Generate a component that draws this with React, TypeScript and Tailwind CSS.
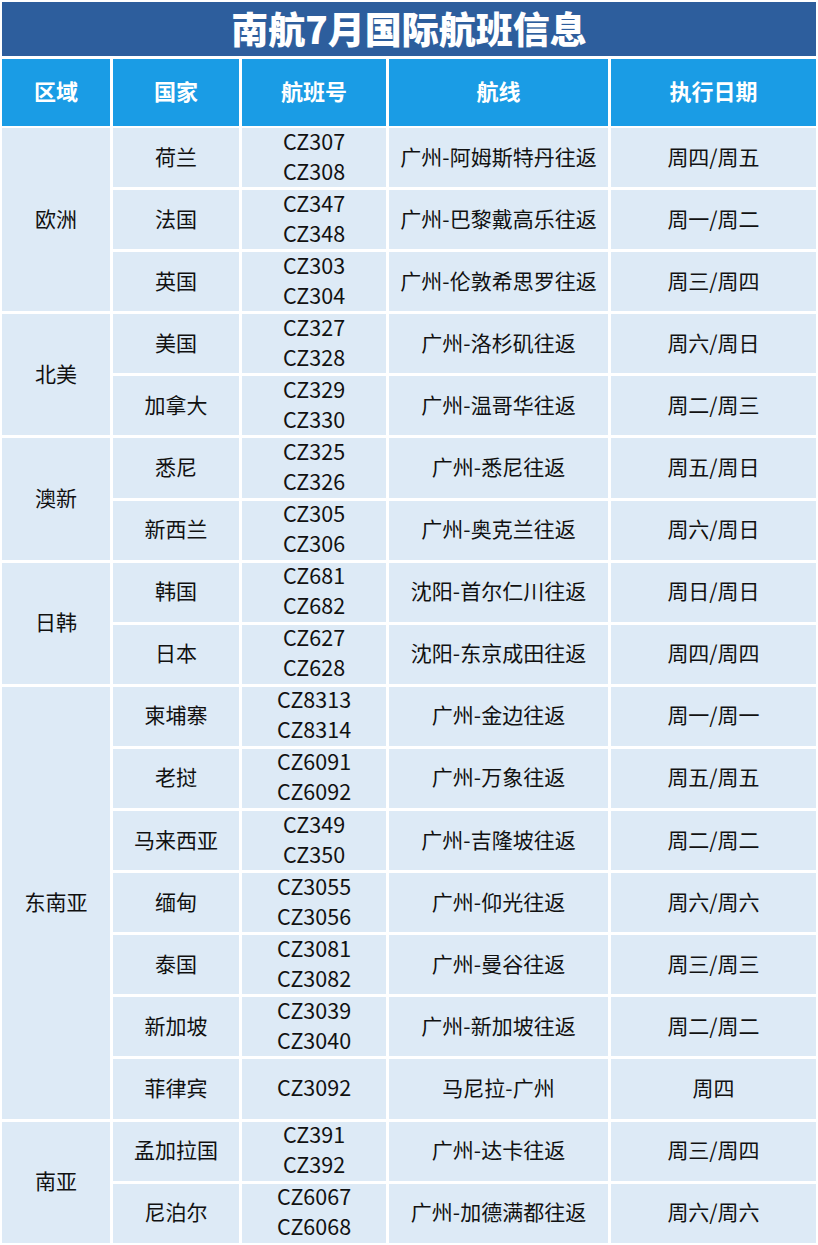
import React from "react";

type Row = { country: string; flights: string[]; route: string; days: string };
type Group = { region: string; span: string; rows: Row[] };

const groups: Group[] = [
  {
    region: "欧洲",
    span: "row-span-3",
    rows: [
      { country: "荷兰", flights: ["CZ307", "CZ308"], route: "广州-阿姆斯特丹往返", days: "周四/周五" },
      { country: "法国", flights: ["CZ347", "CZ348"], route: "广州-巴黎戴高乐往返", days: "周一/周二" },
      { country: "英国", flights: ["CZ303", "CZ304"], route: "广州-伦敦希思罗往返", days: "周三/周四" },
    ],
  },
  {
    region: "北美",
    span: "row-span-2",
    rows: [
      { country: "美国", flights: ["CZ327", "CZ328"], route: "广州-洛杉矶往返", days: "周六/周日" },
      { country: "加拿大", flights: ["CZ329", "CZ330"], route: "广州-温哥华往返", days: "周二/周三" },
    ],
  },
  {
    region: "澳新",
    span: "row-span-2",
    rows: [
      { country: "悉尼", flights: ["CZ325", "CZ326"], route: "广州-悉尼往返", days: "周五/周日" },
      { country: "新西兰", flights: ["CZ305", "CZ306"], route: "广州-奥克兰往返", days: "周六/周日" },
    ],
  },
  {
    region: "日韩",
    span: "row-span-2",
    rows: [
      { country: "韩国", flights: ["CZ681", "CZ682"], route: "沈阳-首尔仁川往返", days: "周日/周日" },
      { country: "日本", flights: ["CZ627", "CZ628"], route: "沈阳-东京成田往返", days: "周四/周四" },
    ],
  },
  {
    region: "东南亚",
    span: "row-span-7",
    rows: [
      { country: "柬埔寨", flights: ["CZ8313", "CZ8314"], route: "广州-金边往返", days: "周一/周一" },
      { country: "老挝", flights: ["CZ6091", "CZ6092"], route: "广州-万象往返", days: "周五/周五" },
      { country: "马来西亚", flights: ["CZ349", "CZ350"], route: "广州-吉隆坡往返", days: "周二/周二" },
      { country: "缅甸", flights: ["CZ3055", "CZ3056"], route: "广州-仰光往返", days: "周六/周六" },
      { country: "泰国", flights: ["CZ3081", "CZ3082"], route: "广州-曼谷往返", days: "周三/周三" },
      { country: "新加坡", flights: ["CZ3039", "CZ3040"], route: "广州-新加坡往返", days: "周二/周二" },
      { country: "菲律宾", flights: ["CZ3092"], route: "马尼拉-广州", days: "周四" },
    ],
  },
  {
    region: "南亚",
    span: "row-span-2",
    rows: [
      { country: "孟加拉国", flights: ["CZ391", "CZ392"], route: "广州-达卡往返", days: "周三/周四" },
      { country: "尼泊尔", flights: ["CZ6067", "CZ6068"], route: "广州-加德满都往返", days: "周六/周六" },
    ],
  },
];

const cell = "bg-[#ddeaf6] flex flex-col items-center justify-center text-center pb-[4px]";
const font = { fontFamily: '"Microsoft YaHei", "Noto Sans CJK SC", "Noto Sans", sans-serif' };

export default function App() {
  const headers = ["区域", "国家", "航班号", "航线", "执行日期"];
  return (
    <div className="w-[818px] bg-white p-[2px] pb-[4px] text-[#111]" style={font}>
      <div className="h-[54px] bg-[#2d5e9d] flex items-center justify-center text-white text-[37px] font-black leading-none pb-[2px]">
        南航7月国际航班信息
      </div>
      <div className="mt-[3px] grid grid-cols-[108px_126px_144px_219px_205px] gap-[3px]">
        {headers.map((h) => (
          <div key={h} className="h-[67px] bg-[#1a9ce5] flex items-center justify-center text-white text-[22px] font-bold pb-[4px]">
            {h}
          </div>
        ))}
      </div>
      <div className="mt-[2px] grid grid-cols-[108px_126px_144px_219px_205px] auto-rows-[59.1px] gap-[3px] text-[21px] leading-[30px]">
        {groups.map((g) => (
          <React.Fragment key={g.region}>
            <div className={`${cell} ${g.span}`}>{g.region}</div>
            {g.rows.map((r) => (
              <React.Fragment key={r.country}>
                <div className={cell}>{r.country}</div>
                <div className={`${cell} text-[21.5px]`}>
                  {r.flights.map((f) => (
                    <span key={f}>{f}</span>
                  ))}
                </div>
                <div className={cell}>{r.route}</div>
                <div className={cell}>{r.days}</div>
              </React.Fragment>
            ))}
          </React.Fragment>
        ))}
      </div>
    </div>
  );
}
